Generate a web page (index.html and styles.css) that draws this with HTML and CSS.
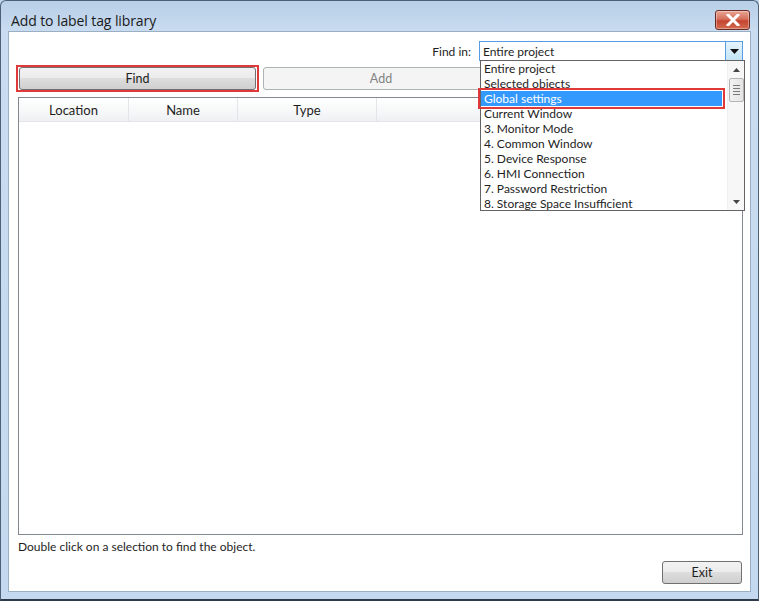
FILE: index.html
```html
<!DOCTYPE html>
<html>
<head>
<meta charset="utf-8">
<link rel="stylesheet" href="styles.css">
</head>
<body>
<div class="window">
  <div class="titlebar">
    <span class="title">Add to label tag library</span>
    <div class="close">
      <svg width="14" height="12" viewBox="0 0 14 12"><path d="M2 1 L12 11 M12 1 L2 11" stroke="#fff" stroke-width="3" stroke-linecap="square" fill="none"/></svg>
    </div>
  </div>
  <div class="client">
    <div class="findrow">
      <span class="findlabel">Find in:</span>
      <div class="combo">
        <span class="combo-text">Entire project</span>
        <span class="combo-btn"><svg width="9" height="5" viewBox="0 0 9 5"><path d="M0 0 H9 L4.5 5 Z" fill="#111"/></svg></span>
      </div>
    </div>
    <div class="btnrow">
      <div class="mark"><button class="btn find">Find</button></div>
      <button class="btn disabled add">Add</button>
    </div>
    <div class="listview">
      <div class="lvhead">
        <div class="col c1">Location</div>
        <div class="col c2">Name</div>
        <div class="col c3">Type</div>
        <div class="col c4"></div>
      </div>
    </div>
    <div class="status">Double click on a selection to find the object.</div>
    <div class="bottomrow"><button class="btn exit">Exit</button></div>

    <div class="dropdown">
      <ul class="items">
        <li>Entire project</li>
        <li>Selected objects</li>
        <li class="sel">Global settings</li>
        <li>Current Window</li>
        <li>3. Monitor Mode</li>
        <li>4. Common Window</li>
        <li>5. Device Response</li>
        <li>6. HMI Connection</li>
        <li>7. Password Restriction</li>
        <li>8. Storage Space Insufficient</li>
      </ul>
      <div class="vscroll">
        <span class="arr"><svg width="7" height="4" viewBox="0 0 7 4"><path d="M0 4 L3.5 0 L7 4 Z" fill="#444"/></svg></span>
        <div class="thumb"><span></span><span></span><span></span><span></span></div>
        <div class="track"></div>
        <span class="arr"><svg width="7" height="4" viewBox="0 0 7 4"><path d="M0 0 L3.5 4 L7 0 Z" fill="#444"/></svg></span>
      </div>
    </div>
  </div>
</div>
</body>
</html>
```

FILE: styles.css
```css
* { box-sizing: border-box; }
html, body { margin: 0; padding: 0; }
body {
  width: 759px; height: 601px; overflow: hidden;
  font-family: "Lato", "Noto Sans", sans-serif;
  font-size: 12px; color: #1e1e1e;
  background: #bfd4ea;
}
.window {
  width: 759px; height: 601px;
  display: flex; flex-direction: column;
  background: linear-gradient(180deg, #b8cfe8 0px, #c9dcf0 31px, #c4d9ef 100%);
  border: 1px solid #4d6078;
  border-radius: 6px 6px 0 0;
  border-bottom: 2px solid #2c3a4a;
}
.titlebar {
  height: 30px; flex: none;
  display: flex; align-items: center;
  padding: 0 8px 0 10px;
}
.title { font-family: "Open Sans", "Noto Sans", sans-serif; font-size: 14px; color: #1a1a1a; flex: 1; margin-top: 8px; letter-spacing: -0.1px; }
.close {
  width: 35px; height: 20px; margin-top: 8px;
  border: 1px solid #6b2b25; border-radius: 3px;
  background: linear-gradient(180deg, #e8a494 0%, #d7705d 45%, #c44430 55%, #d46a50 100%);
  display: flex; align-items: center; justify-content: center;
  box-shadow: inset 0 0 0 1px rgba(255,255,255,0.35);
}
.client {
  position: relative;
  flex: 1; margin: 0 7px 7px 7px;
  background: #fff;
  border: 1px solid #9aaec4;
  padding: 9px 7px 0 9px;
  display: flex; flex-direction: column;
}
.findrow { display: flex; justify-content: flex-end; align-items: center; height: 20px; }
.findlabel { margin-right: 8px; }
.combo {
  width: 264px; height: 20px;
  border: 1px solid #569de5;
  display: flex; align-items: center;
}
.combo-text { flex: 1; padding-left: 3px; }
.combo-btn {
  width: 17px; height: 18px;
  background: linear-gradient(180deg, #e5f4fc, #c4e5f6);
  border-left: 1px solid #569de5;
  display: flex; align-items: center; justify-content: center;
}
.btnrow { display: flex; align-items: center; margin-top: 3px; height: 28px; }
.mark { border: 2px solid #e0393a; padding: 0 1px; margin-left: -2px; }
.btn {
  font-family: inherit; font-size: 12.5px; color: #1e1e1e;
  height: 23px; padding: 0;
  border: 1px solid #707070; border-radius: 3px;
  background: linear-gradient(180deg, #f2f2f2 0%, #ebebeb 50%, #dddddd 50%, #cfcfcf 100%);
}
.find { width: 237px; display: block; }
.add { width: 236px; margin-left: 4px; }
.disabled { border-color: #adb2b5; background: #f4f4f4; color: #838383; }
.listview {
  margin-top: 5px;
  height: 438px;
  border: 1px solid #828790;
}
.lvhead {
  display: flex; height: 24px;
  background: linear-gradient(180deg, #ffffff 0%, #f6f7f8 60%, #eef0f2 100%);
  border-bottom: 1px solid #e3e5e8;
}
.col { display: flex; align-items: center; justify-content: center; border-right: 1px solid #e3e5e8; font-size: 13px; }
.c1 { width: 110px; }
.c2 { width: 109px; }
.c3 { width: 139px; }
.c4 { flex: 1; border-right: none; }
.status { margin-top: 4px; height: 15px; line-height: 15px; }
.bottomrow { display: flex; justify-content: flex-end; margin-top: 7px; padding-right: 1px; }
.exit { width: 80px; }

.dropdown {
  position: absolute; left: 471px; top: 28px;
  width: 265px; height: 151px;
  background: #fff;
  border: 1px solid #646464;
  display: flex;
}
.items { list-style: none; margin: 0; padding: 0; flex: 1; }
.items li { height: 15px; line-height: 15px; padding-left: 3px; white-space: nowrap; }
.items li.sel { background: #3399ff; color: #fff; outline: 2px solid #e0393a; outline-offset: 1px; margin-right: 5px; }
.vscroll {
  width: 17px; display: flex; flex-direction: column; align-items: center;
  background: #f7f7f7; border-left: 1px solid #f0f0f0;
}
.arr { height: 17px; display: flex; align-items: center; justify-content: center; }
.thumb {
  width: 15px; height: 24px;
  border: 1px solid #b4b4b4; border-radius: 2px;
  background: linear-gradient(90deg, #f2f2f2, #e4e4e4);
  display: flex; flex-direction: column; align-items: center; justify-content: center; gap: 2px;
}
.thumb span { width: 7px; height: 1px; background: #7a7a7a; }
.track { flex: 1; }
```
